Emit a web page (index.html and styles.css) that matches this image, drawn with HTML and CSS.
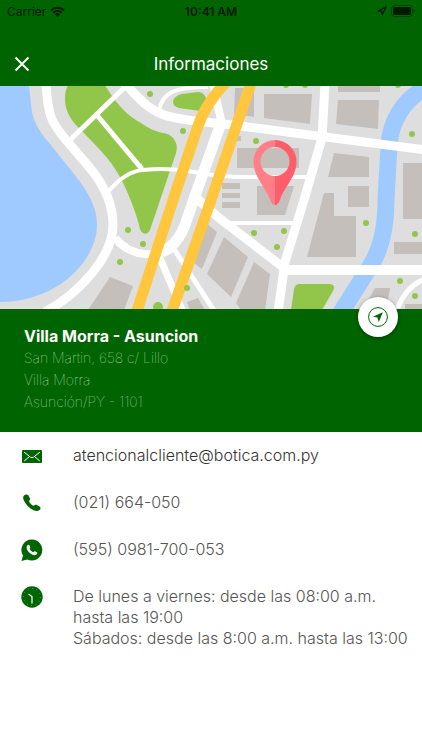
FILE: index.html
```html
<!DOCTYPE html>
<html lang="es">
<head>
    <meta charset="UTF-8">
    <meta name="viewport" content="width=device-width, initial-scale=1.0">
    <title>Informaciones</title>
    <link rel="stylesheet" href="styles.css">
</head>
<body>
    <header class="header">
        <div class="status-bar">
            <div class="status-left">
                <span>Carrier</span>
                <svg width="15" height="11" viewBox="0 0 15 11" aria-hidden="true">
                    <path d="M1 4.2a9.5 9.5 0 0 1 13 0M3.3 6.7a6.2 6.2 0 0 1 8.4 0" fill="none" stroke="currentColor" stroke-width="2"/>
                    <path d="M7.5 11 5 8.3a3.6 3.6 0 0 1 5 0z" fill="currentColor"/>
                </svg>
            </div>
            <span class="status-time">10:41 AM</span>
            <div class="status-right">
                <svg width="10" height="10" viewBox="0 0 10 10" aria-hidden="true">
                    <path d="M1 5 9 1 5.2 9 4.8 5.2z" fill="none" stroke="currentColor" stroke-width="1.2" stroke-linejoin="round"/>
                </svg>
                <svg width="24" height="12" viewBox="0 0 24 12" aria-hidden="true">
                    <rect x="0.5" y="0.5" width="21" height="11" rx="3" fill="none" stroke="currentColor" stroke-opacity="0.4"/>
                    <rect x="2" y="2" width="18" height="8" rx="1.6" fill="currentColor"/>
                    <path d="M22.5 4v4c1.4-.6 1.4-3.4 0-4z" fill="currentColor" fill-opacity="0.5"/>
                </svg>
            </div>
        </div>
        <div class="nav-bar">
            <button class="close-btn" type="button" aria-label="Cerrar">
                <svg width="16" height="16" viewBox="0 0 16 16" aria-hidden="true">
                    <path d="M1.5 1.5l13 13M14.5 1.5l-13 13" fill="none" stroke="currentColor" stroke-width="2"/>
                </svg>
            </button>
            <h1 class="nav-title">Informaciones</h1>
        </div>
    </header>

    <main>
        <svg class="map" viewBox="0 0 422 223" role="img" aria-label="Mapa">
            <!-- water -->
            <g fill="#9ecaff">
                <path d="M0 0H29L31 18C32 35 39 45 50 58L74 88C88 106 97 120 97 139C97 174 58 216 0 216Z"/>
            </g>
            <path d="M428 1C402 13 390 38 389 60L386 114C386 140 381 163 371 179L340 228" fill="none" stroke="#9ecaff" stroke-width="17"/>

            <!-- parks -->
            <g fill="#92c64a">
                <path d="M68-1H105C114 15 127 30 141 37C148 42 154 45 163 47C173 48 179 57 176 67L151 141C149 150 142 149 140 143C137 129 129 108 120 91C109 71 95 59 82 45C71 35 65 25 65 13C65 7 66 3 68-1Z"/>
                <path d="M173 16C173 12 177 9 182 8L198 6C203 6 206 10 206 13L200 25L179 22C175 21 173 19 173 16Z"/>
                <path d="M294 203Q295 198 300 198H330Q336 199 333 205L322 224H291Z"/>
                <circle cx="158" cy="221" r="5"/>
            </g>

            <!-- buildings -->
            <g fill="#c5bfbb">
                <path d="M235 2H254V31L234 28Z"/>
                <path d="M264 8H312L310 38L264 32Z"/>
                <path d="M237 50h4v5h-4zM237 62h62v20h-62z"/>
                <path d="M222 97h18v6h-18zM222 107h18v5h-18zM222 116h18v6h-18z"/>
                <path d="M257 100H294L285 129H257Z"/>
                <path d="M338-2h42v8h-42z"/>
                <path d="M338 14H379L378 43L336 38Z"/>
                <path d="M334 67L369 71V91H328Z"/>
                <path d="M348 100h21v21h-21z"/>
                <path d="M324 107H334V130H356V171H307Z"/>
                <path d="M403 77h20v56h-20zM394 156h29v12h-29z"/>
                <path d="M375 202H390L386 224H363ZM405 218h18v6h-18z"/>
                <path d="M110 191L133 200L124 224H88Z"/>
                <path d="M206 137L217 146L202 183L190 174Z"/>
                <path d="M224 151L248 171L231 211L207 188Z"/>
                <path d="M254 176L270 188L265 224H241L236 217Z"/>
                <path d="M187 216L198 212L205 224H190Z"/>
            </g>

            <!-- streets -->
            <g fill="none" stroke="#fff">
                <path d="M46-2C48 30 51 36 66 54L90 82C104 99 113 118 113 139C113 170 80 207 45 226" stroke-width="9"/>
                <path d="M124-3C138 10 145 22 164 29C185 36 215 36 240 40L426 64" stroke-width="9"/>
                <path d="M70 54L125 1M96 28L141 82" stroke-width="5"/>
                <path d="M108 106C118 94 130 85 143 84C160 82 178 83 194 86C215 90 230 91 245 91H308" stroke-width="4"/>
                <path d="M159 24C163 7 173 1 208 1" stroke-width="4"/>
                <path d="M213-2L222 38" stroke-width="8"/>
                <path d="M220 40L195 110L186 136C181 151 173 161 162 166" stroke-width="11"/>
                <path d="M174 161C160 171 132 173 115 152" stroke-width="8"/>
                <path d="M194 110L218 131L284 182" stroke-width="9"/>
                <path d="M228 137H296" stroke-width="4"/>
                <path d="M325-2L322 52L304 114L285 176L278 226" stroke-width="9"/>
                <path d="M284 184H424" stroke-width="10"/>
                <path d="M159 170L183 226" stroke-width="7"/>
                <path d="M174 163L215 226" stroke-width="5"/>
                <path d="M396 226C402 209 411 198 425 193" stroke-width="5"/>
            </g>
            <path d="M141 77l4 7-4 2z" fill="#fff"/>

            <!-- avenues -->
            <g fill="none" stroke="#ffc63e" stroke-width="11">
                <path d="M226-4C209 14 202 28 198 40L174 111L136 228"/>
                <path d="M251-3L211 114L171 228"/>
            </g>

            <!-- trees -->
            <g fill="#92c64a">
                <circle cx="150" cy="8" r="3"/>
                <circle cx="183" cy="45" r="3"/>
                <circle cx="256" cy="55" r="3"/>
                <circle cx="286" cy="-1" r="3"/>
                <circle cx="305" cy="-1" r="3"/>
                <circle cx="398" cy="-1" r="3"/>
                <circle cx="412" cy="48" r="3"/>
                <circle cx="128" cy="144" r="3"/>
                <circle cx="120" cy="176" r="3"/>
                <circle cx="143" cy="158" r="3"/>
                <circle cx="187" cy="202" r="3"/>
                <circle cx="254" cy="147" r="3"/>
                <circle cx="277" cy="161" r="3"/>
                <circle cx="284" cy="145" r="3"/>
                <circle cx="366" cy="137" r="3"/>
                <circle cx="415" cy="148" r="3"/>
                <circle cx="400" cy="195" r="3"/>
                <circle cx="415" cy="210" r="3"/>
            </g>

            <!-- pin -->
            <path d="M275 54A21.5 21.5 0 0 0 253.500 76C253.500 91 266 101 270 114Q272 119 275 119V90A14.500 14.500 0 0 1 275 61Z" fill="#ff7f89"/>
            <path d="M275 54A21.500 21.500 0 0 1 296.500 76C296.500 91 284 101 280 114Q278 119 275 119V90A14.500 14.500 0 0 0 275 61Z" fill="#ff5d6c"/>
        </svg>

        <section class="store">
            <button class="route-btn" type="button" aria-label="Cómo llegar">
                <svg width="20" height="20" viewBox="0 0 20 20" aria-hidden="true">
                    <circle cx="10" cy="10" r="9.400" fill="none" stroke="currentColor"/>
                    <path d="M14.800 5.200 10.800 15 9.400 10.600 5 9.800z" fill="currentColor"/>
                </svg>
            </button>
            <h2 class="store-name">Villa Morra - Asuncion</h2>
            <address class="store-address">
                San Martin, 658 c/ Lillo<br>
                Villa Morra<br>
                Asunción/PY - 1101
            </address>
        </section>

        <ul class="contact-list">
            <li class="contact-item">
                <svg class="contact-icon" viewBox="0 0 22 22" aria-hidden="true">
                    <rect x="1" y="5" width="20" height="13" rx="1" fill="currentColor"/>
                    <path d="M3 7l6.500 5.200q1.500 1 3 0L19 7M3.200 16l5-4.200M18.800 16l-5-4.200" fill="none" stroke="#fff"/>
                </svg>
                <a class="contact-email" href="mailto:atencionalcliente@botica.com.py">atencionalcliente@botica.com.py</a>
            </li>
            <li class="contact-item">
                <svg class="contact-icon" viewBox="0 0 22 22" aria-hidden="true">
                    <path d="M3 3.500C4.500 2 6.500 2 7.500 3.500L9 6.500C9.500 7.500 8.500 8.300 8 9.200C8.500 11 11 13.300 12.700 13.800C13.500 13.300 14.300 12.300 15.300 12.800L18.500 14.500C20 15.500 19.700 17 18.500 18C16.500 19.800 13 19 9.500 16.500C5.500 13.500 3.500 10 2.500 7.500C2 6 2 4.500 3 3.500Z" fill="currentColor"/>
                </svg>
                <a href="tel:021664050">(021) 664-050</a>
            </li>
            <li class="contact-item">
                <svg class="contact-icon" viewBox="0 0 22 22" aria-hidden="true">
                    <path d="M11 0.500A10.500 10.500 0 1 1 6.300 20.500L0.500 22L2 16.500A10.500 10.500 0 0 1 11 0.500Z" fill="currentColor"/>
                    <path d="M6.500 6.300C7.200 5.500 8.200 5.500 8.600 6.400L9.300 8.200C9.500 8.800 8.800 9.300 8.500 9.800C9.200 11.300 10.500 12.500 12.200 13.200C12.800 12.800 13.200 11.900 13.900 12.200L15.900 13.200C16.600 13.600 16.300 14.500 15.800 15.200C14.500 16.700 12 16.300 9.500 14.600C7.500 13.200 6.300 11.300 5.800 9.800C5.400 8.500 5.600 7.200 6.500 6.300Z" fill="#fff"/>
                </svg>
                <a href="tel:5950981700053">(595) 0981-700-053</a>
            </li>
            <li class="contact-item">
                <svg class="contact-icon" viewBox="0 0 22 22" aria-hidden="true">
                    <circle cx="11" cy="11" r="10.700" fill="currentColor"/>
                    <circle cx="11" cy="11" r="8.500" fill="none" stroke="#fff" stroke-opacity="0.6" stroke-dasharray="0.600 3.850"/>
                    <path d="M7.500 8 11 10.500V17.500" fill="none" stroke="#fff" stroke-width="1.200"/>
                </svg>
                <p class="contact-hours">De lunes a viernes: desde las 08:00 a.m. hasta las 19:00<br>Sábados: desde las 8:00 a.m. hasta las 13:00</p>
            </li>
        </ul>
    </main>
</body>
</html>
```

FILE: styles.css
```css
* {
    box-sizing: border-box;
}
body {
    margin: 0;
    font-family: Inter, "Liberation Sans", sans-serif;
    background-color: #fff;
    color: #555;
}
h1, h2, p, ul {
    margin: 0;
    padding: 0;
}
button {
    padding: 0;
    border: none;
    cursor: pointer;
}
a {
    color: inherit;
    text-decoration: none;
}
svg {
    display: block;
}

/* Header */
.header {
    background-color: #006400;
    color: #fff;
}
.status-bar {
    display: grid;
    grid-template-columns: 1fr auto 1fr;
    align-items: center;
    height: 22px;
    padding: 0 7px;
    color: #001a00;
    font-size: 12px;
}
.status-left, .status-right {
    display: flex;
    align-items: center;
    gap: 4px;
}
.status-right {
    justify-content: flex-end;
}
.status-time {
    font-weight: 600;
}
.nav-bar {
    display: grid;
    grid-template-columns: 44px 1fr 44px;
    align-items: center;
    height: 64px;
    padding-top: 20px;
}
.close-btn {
    display: flex;
    align-items: center;
    justify-content: center;
    height: 44px;
    background: none;
    color: #fff;
}
.nav-title {
    text-align: center;
    font-size: 17px;
    font-weight: 400;
}

/* Map */
.map {
    width: 100%;
    height: auto;
    background-color: #dedede;
}

/* Store */
.store {
    position: relative;
    padding: 16px 24px 19px;
    background-color: #006400;
    color: #fff;
}
.store-name {
    font-size: 16px;
    font-weight: 700;
    line-height: 22px;
}
.store-address {
    font-size: 14px;
    font-style: normal;
    font-weight: 100;
    line-height: 22px;
    color: #d0e4d0;
}
.route-btn {
    position: absolute;
    top: -12px;
    right: 24px;
    display: flex;
    align-items: center;
    justify-content: center;
    width: 40px;
    height: 40px;
    border-radius: 50%;
    background-color: #fff;
    color: #006400;
    box-shadow: 0 1px 4px rgba(0, 0, 0, 0.4);
}

/* Contact */
.contact-list {
    display: flex;
    flex-direction: column;
    gap: 25px;
    padding: 13px 4px 13px 21px;
    list-style: none;
    font-size: 16px;
    font-weight: 300;
    line-height: 21px;
}
.contact-item {
    display: flex;
    align-items: flex-start;
    gap: 30px;
}
.contact-icon {
    flex: none;
    width: 22px;
    height: 22px;
    color: #006400;
}
.contact-email {
    color: #333;
}
```
